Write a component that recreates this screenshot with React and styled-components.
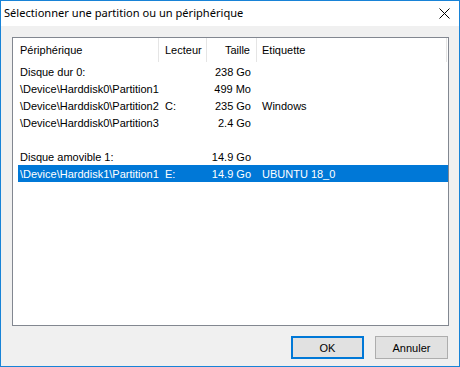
import React from "react";
import styled, { createGlobalStyle } from "styled-components";

const Global = createGlobalStyle`
  html, body { margin: 0; padding: 0; background: #ffffff; }
  * { box-sizing: border-box; }
`;

const Window = styled.div`
  width: 460px;
  height: 367px;
  border: 1px solid #1883d7;
  display: flex;
  flex-direction: column;
  background: #f0f0f0;
  font-family: "Liberation Sans", Arial, sans-serif;
  font-size: 11px;
  color: #000;
`;

const TitleBar = styled.div`
  height: 25px;
  background: #ffffff;
  display: flex;
  align-items: center;
  justify-content: space-between;
  padding: 0 9px 0 3px;
  font-family: "Noto Sans", "Open Sans", sans-serif;
  font-size: 11.1px;
  color: #000;
`;

const TitleText = styled.span`
  line-height: 1;
  position: relative;
  top: -1px;
`;

const Body = styled.div`
  flex: 1;
  display: flex;
  flex-direction: column;
  padding: 11px 10px 7px 11px;
  gap: 10px;
`;

const ListBox = styled.div`
  flex: 1;
  background: #ffffff;
  border: 1px solid #828790;
  display: flex;
  flex-direction: column;
`;

const Header = styled.div`
  display: grid;
  grid-template-columns: 146px 48px 50px 190px;
  height: 25px;
`;

const HeadCell = styled.div`
  display: flex;
  align-items: center;
  justify-content: ${(p) => (p.$right ? "flex-end" : "flex-start")};
  padding-left: ${(p) => p.$pl || 0}px;
  padding-right: ${(p) => p.$pr || 0}px;
  border-right: 1px solid #e5e5e5;
  height: 24px;
  color: #000;
`;

const Rows = styled.div`
  display: flex;
  flex-direction: column;
  padding-left: 5px;
`;

const Row = styled.div`
  display: grid;
  grid-template-columns: 141px 48px 50px 190px;
  height: 17px;
  align-items: center;
  background: ${(p) => (p.$selected ? "#0078d7" : "transparent")};
  color: ${(p) => (p.$selected ? "#ffffff" : "#000000")};
`;

const Cell = styled.div`
  white-space: nowrap;
  text-align: ${(p) => (p.$right ? "right" : "left")};
  padding-left: ${(p) => p.$pl || 0}px;
  padding-right: ${(p) => p.$pr || 0}px;
`;

const Buttons = styled.div`
  display: flex;
  justify-content: flex-end;
  gap: 11px;
  padding-right: 1px;
  height: 23px;
`;

const Button = styled.button`
  width: 73px;
  height: 23px;
  background: #e1e1e1;
  border: ${(p) => (p.$default ? "2px solid #0078d7" : "1px solid #adadad")};
  font-family: "Liberation Sans", Arial, sans-serif;
  font-size: 11px;
  color: #000;
  padding: 0;
  margin: 0;
`;

const rows = [
  { a: "Disque dur 0:", b: "", c: "238 Go", d: "" },
  { a: "\\Device\\Harddisk0\\Partition1", b: "", c: "499 Mo", d: "" },
  { a: "\\Device\\Harddisk0\\Partition2", b: "C:", c: "235 Go", d: "Windows" },
  { a: "\\Device\\Harddisk0\\Partition3", b: "", c: "2.4 Go", d: "" },
  { a: "", b: "", c: "", d: "" },
  { a: "Disque amovible 1:", b: "", c: "14.9 Go", d: "" },
  { a: "\\Device\\Harddisk1\\Partition1", b: "E:", c: "14.9 Go", d: "UBUNTU 18_0", sel: true },
];

export default function App() {
  return (
    <>
      <Global />
      <Window>
        <TitleBar>
          <TitleText>Sélectionner une partition ou un périphérique</TitleText>
          <svg width="11" height="11" viewBox="0 0 11 11">
            <path d="M0.5 0.5 L10.5 10.5 M10.5 0.5 L0.5 10.5" stroke="#000" strokeWidth="1" fill="none" />
          </svg>
        </TitleBar>
        <Body>
          <ListBox>
            <Header>
              <HeadCell $pl={7}>Périphérique</HeadCell>
              <HeadCell $pl={6}>Lecteur</HeadCell>
              <HeadCell $right $pr={6}>Taille</HeadCell>
              <HeadCell $pl={5}>Etiquette</HeadCell>
            </Header>
            <Rows>
              {rows.map((r, i) => (
                <Row key={i} $selected={r.sel}>
                  <Cell $pl={2}>{r.a}</Cell>
                  <Cell $pl={6}>{r.b}</Cell>
                  <Cell $right $pr={6}>{r.c}</Cell>
                  <Cell $pl={5}>{r.d}</Cell>
                </Row>
              ))}
            </Rows>
          </ListBox>
          <Buttons>
            <Button $default>OK</Button>
            <Button>Annuler</Button>
          </Buttons>
        </Body>
      </Window>
    </>
  );
}
